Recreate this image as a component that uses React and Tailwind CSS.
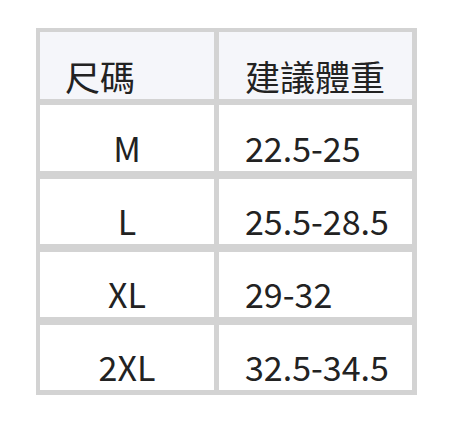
import React from "react";

const rows = [
  ["M", "22.5-25"],
  ["L", "25.5-28.5"],
  ["XL", "29-32"],
  ["2XL", "32.5-34.5"],
];

export default function App() {
  return (
    <div className="w-[452px] h-[422px] bg-white pt-[28px] pl-[36px]">
      <div
        className="w-[381px] bg-[#d3d3d3] pt-[4px] pl-[4px] pr-[5px] pb-[5px] flex flex-col text-[#222] text-[34px] leading-none"
        style={{ fontFamily: '"Noto Sans CJK TC", "Noto Sans", sans-serif' }}
      >
        <div className="flex gap-[5px] h-[67px] text-[35px]">
          <div className="w-[174px] bg-[#f5f6fa] flex items-end pl-[25px] pb-[6px]">尺碼</div>
          <div className="flex-1 bg-[#f5f6fa] flex items-end pl-[26px] pb-[6px]">建議體重</div>
        </div>
        {rows.map(([size, weight], i) => (
          <div
            key={size}
            className={`flex gap-[5px] ${i === 0 ? "mt-[6px] h-[66px]" : "mt-[8px] h-[65px]"}`}
          >
            <div className="w-[174px] bg-white flex items-end justify-center pb-[6px]">{size}</div>
            <div className="flex-1 bg-white flex items-end pl-[26px] pb-[6px]">{weight}</div>
          </div>
        ))}
      </div>
    </div>
  );
}
